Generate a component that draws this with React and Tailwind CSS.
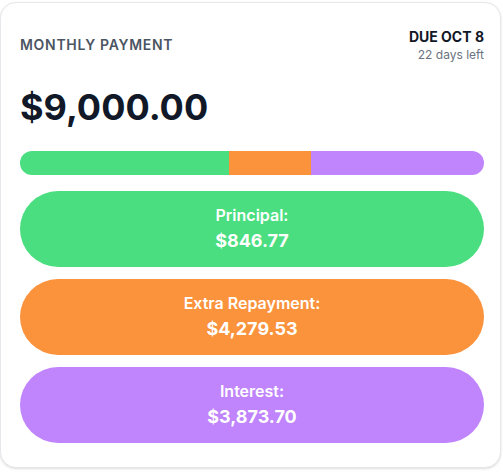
export default function App() {
  const parts = [
    { label: "Principal:", value: "$846.77", bg: "bg-[#4ade80]" },
    { label: "Extra Repayment:", value: "$4,279.53", bg: "bg-[#fb923c]" },
    { label: "Interest:", value: "$3,873.70", bg: "bg-[#c084fc]" },
  ];
  return (
    <div className="w-[503px] h-[474px] bg-white pt-[2px]" style={{ fontFamily: "Inter, 'Noto Sans', sans-serif" }}>
      <div className="w-[501px] rounded-2xl border border-[#e5e7eb] bg-white shadow-sm pl-[19px] pr-4 pt-6 pb-6">
        <div className="flex items-center justify-between">
          <div className="text-sm font-semibold tracking-wider text-[#4b5563]">MONTHLY PAYMENT</div>
          <div className="text-right">
            <div className="text-sm font-bold leading-5 text-[#111827]">DUE OCT 8</div>
            <div className="text-xs leading-4 text-[#6b7280]">22 days left</div>
          </div>
        </div>
        <div className="mt-6 text-4xl font-bold leading-10 text-[#111827]">$9,000.00</div>
        <div className="mt-6 flex h-6 w-full overflow-hidden rounded-full">
          <div className="h-full w-[45%] bg-[#4ade80]" />
          <div className="h-full w-[17.7%] bg-[#fb923c]" />
          <div className="h-full flex-1 bg-[#c084fc]" />
        </div>
        <div className="mt-4 flex flex-col gap-3">
          {parts.map((p) => (
            <div key={p.label} className={`${p.bg} flex h-[76px] flex-col items-center justify-center rounded-full text-white`}>
              <div className="text-base font-semibold leading-6">{p.label}</div>
              <div className="text-lg font-bold leading-7">{p.value}</div>
            </div>
          ))}
        </div>
      </div>
    </div>
  );
}
